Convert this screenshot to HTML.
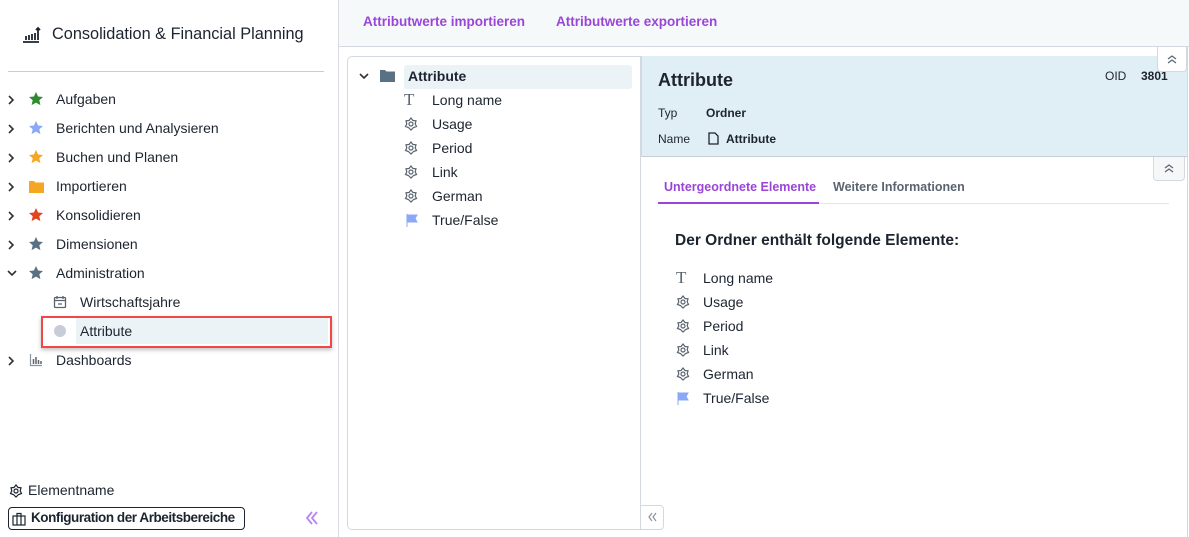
<!DOCTYPE html>
<html><head><meta charset="utf-8"><style>
*{box-sizing:border-box;margin:0;padding:0}
body{width:1189px;height:537px;overflow:hidden;background:#fff;font-family:"Liberation Sans",sans-serif;color:#1c2430;font-size:14px;position:relative}
.a{position:absolute;white-space:nowrap}
.side{position:absolute;left:0;top:0;width:339px;height:537px;border-right:1px solid #d8dbe3}
.nav{position:absolute;left:56px;font-size:14px}
.ico{position:absolute}
.top{position:absolute;left:339px;top:0;width:850px;height:47px;background:#f5f9fa;border-bottom:1px solid #d4d8e0}
.purple{color:#9b45d8;font-weight:bold;font-size:13.5px}
.st{position:absolute;left:28px;width:16px;height:16px}
</style></head><body>
<svg width="0" height="0" style="position:absolute"><defs>
<path id="star" d="M8 1l2.1 4.5 4.9.5-3.7 3.3 1.1 4.8L8 11.6 3.6 14.1l1.1-4.8L1 6l4.9-.5z"/>
<path id="cr" d="M4 3l4 4-4 4" fill="none" stroke="#333" stroke-width="1.6"/>
<path id="cd" d="M3 5l4 4 4-4" fill="none" stroke="#333" stroke-width="1.6"/>
</defs></svg>
<div class="side">
  <svg class="ico" style="left:22px;top:25px" width="20" height="20" viewBox="0 0 20 20"><path d="M1 17h16M4 15v-4M7 15v-5M10 15v-6M13 15v-7M16 15V3M14 5l2-2 2 2" stroke="#1c2430" stroke-width="1.8" fill="none"/></svg>
  <div class="a" style="left:52px;top:25px;font-size:16.3px;color:#1c2430">Consolidation &amp; Financial Planning</div>
  <div style="position:absolute;left:8px;top:71px;width:316px;height:1px;background:#c8ccd4"></div>
  <svg class="ico" style="left:5px;top:93px" width="14" height="14"><use href="#cr"/></svg><svg class="st" style="top:91px" viewBox="0 0 16 16"><use href="#star" fill="#2e8b2e"/></svg><div class="nav a" style="top:91px">Aufgaben</div>
  <svg class="ico" style="left:5px;top:122px" width="14" height="14"><use href="#cr"/></svg><svg class="st" style="top:120px" viewBox="0 0 16 16"><use href="#star" fill="#8aa8f5"/></svg><div class="nav a" style="top:120px">Berichten und Analysieren</div>
  <svg class="ico" style="left:5px;top:151px" width="14" height="14"><use href="#cr"/></svg><svg class="st" style="top:149px" viewBox="0 0 16 16"><use href="#star" fill="#f5a623"/></svg><div class="nav a" style="top:149px">Buchen und Planen</div>
  <svg class="ico" style="left:5px;top:180px" width="14" height="14"><use href="#cr"/></svg><svg class="ico" style="left:29px;top:180px" width="15" height="14" viewBox="0 0 15 14"><path d="M0 1h5l1.5 1.5H15V13H0z" fill="#f5a623"/></svg><div class="nav a" style="top:178px">Importieren</div>
  <svg class="ico" style="left:5px;top:209px" width="14" height="14"><use href="#cr"/></svg><svg class="st" style="top:207px" viewBox="0 0 16 16"><use href="#star" fill="#e0451f"/></svg><div class="nav a" style="top:207px">Konsolidieren</div>
  <svg class="ico" style="left:5px;top:238px" width="14" height="14"><use href="#cr"/></svg><svg class="st" style="top:236px" viewBox="0 0 16 16"><use href="#star" fill="#5a7184"/></svg><div class="nav a" style="top:236px">Dimensionen</div>
  <svg class="ico" style="left:5px;top:266px" width="14" height="14"><use href="#cd"/></svg><svg class="st" style="top:265px" viewBox="0 0 16 16"><use href="#star" fill="#5a7184"/></svg><div class="nav a" style="top:265px">Administration</div>
  <svg class="ico" style="left:53px;top:295px" width="14" height="14" viewBox="0 0 14 14"><rect x="1.5" y="2.5" width="11" height="10" rx="1" fill="none" stroke="#5a6470" stroke-width="1.3"/><path d="M1.5 5.5h11M4 1v3M10 1v3M5 9h4" stroke="#5a6470" stroke-width="1.3"/></svg>
  <div class="a" style="left:80px;top:294px">Wirtschaftsjahre</div>
  <div style="position:absolute;left:76px;top:318px;width:252px;height:26px;background:#ecf3f6"></div>
  <div style="position:absolute;left:41px;top:316px;width:291px;height:32px;border:2px solid #f04848;box-shadow:0 2px 4px rgba(0,0,0,.25)"></div>
  <div class="ico" style="left:54px;top:325px;width:12px;height:12px;border-radius:50%;background:#c8ccd8"></div>
  <div class="a" style="left:80px;top:323px">Attribute</div>
  <svg class="ico" style="left:5px;top:354px" width="14" height="14"><use href="#cr"/></svg>
  <svg class="ico" style="left:29px;top:353px" width="14" height="14" viewBox="0 0 14 14"><path d="M1.5 1v11.5H13" stroke="#8a92a0" stroke-width="1.2" fill="none"/><path d="M4.5 11V6M7 11V4M9.5 11V7M12 11V8" stroke="#5a6470" stroke-width="1.5"/></svg>
  <div class="nav a" style="top:352px">Dashboards</div>
  <svg class="ico" style="left:9px;top:484px" width="14" height="14" viewBox="0 0 14 14"><path d="M7 1l2 2.5 3 .3-.8 3 1.3 2.7-2.9 1L7 13l-2.6-2.5-2.9-1L2.8 6.8 2 3.8l3-.3z" fill="none" stroke="#1c2430" stroke-width="1.2"/><circle cx="7" cy="7" r="2" fill="none" stroke="#1c2430" stroke-width="1.2"/></svg>
  <div class="a" style="left:28px;top:482px">Elementname</div>
  <div style="position:absolute;left:8px;top:507px;width:237px;height:23px;border:1px solid #1c2430;border-radius:4px"></div>
  <svg class="ico" style="left:12px;top:512px" width="14" height="14" viewBox="0 0 14 14"><rect x="1" y="4" width="12" height="9" fill="none" stroke="#1c2430" stroke-width="1.2"/><path d="M5 4V1.5h4V4M5 4v9M9 4v9" stroke="#1c2430" stroke-width="1.2" fill="none"/></svg>
  <div class="a" style="left:31px;top:510px;font-weight:bold;font-size:13.5px;letter-spacing:-.45px">Konfiguration der Arbeitsbereiche</div>
  <svg class="ico" style="left:304px;top:510px" width="16" height="16" viewBox="0 0 16 16"><path d="M8 2L3 8l5 6M13 2L8 8l5 6" fill="none" stroke="#b884f0" stroke-width="1.8"/></svg>
</div>
<div class="top">
  <div class="a purple" style="left:24px;top:14px">Attributwerte importieren</div>
  <div class="a purple" style="left:217px;top:14px">Attributwerte exportieren</div>
</div>
<div style="position:absolute;left:347px;top:56px;width:294px;height:474px;border:1px solid #d4d8e0;border-radius:5px 0 0 5px"></div>
<svg class="ico" style="left:357px;top:69px" width="14" height="14"><use href="#cd"/></svg>
<svg class="ico" style="left:380px;top:69px" width="15" height="13" viewBox="0 0 15 13"><path d="M0 1h5l1.5 1.5H15V13H0z" fill="#5a7184"/></svg>
<div style="position:absolute;left:404px;top:65px;width:228px;height:24px;background:#ecf3f6;border-radius:3px"></div>
<div class="a" style="left:408px;top:68px;font-weight:bold">Attribute</div>
<div class="a" style="left:404px;top:90px;font-family:'Liberation Serif',serif;font-size:17px;color:#5a6470">T</div>
<div class="a" style="left:432px;top:92px">Long name</div>
<div class="a" style="left:432px;top:116px">Usage</div>
<div class="a" style="left:432px;top:140px">Period</div>
<div class="a" style="left:432px;top:164px">Link</div>
<div class="a" style="left:432px;top:188px">German</div>
<div class="a" style="left:432px;top:212px">True/False</div>
<svg class="ico" style="left:404px;top:117px" width="14" height="96" viewBox="0 0 14 96">
<g fill="none" stroke="#5a6470" stroke-width="1.2"><path id="f" d="M7 1l2 2.5 3 .3-.8 3 1.3 2.7-2.9 1L7 13l-2.6-2.5-2.9-1L2.8 6.8 2 3.8l3-.3z"/><circle cx="7" cy="7" r="2"/>
<g transform="translate(0,24)"><use href="#f"/><circle cx="7" cy="7" r="2"/></g>
<g transform="translate(0,48)"><use href="#f"/><circle cx="7" cy="7" r="2"/></g>
<g transform="translate(0,72)"><use href="#f"/><circle cx="7" cy="7" r="2"/></g></g></svg>
<svg class="ico" style="left:406px;top:214px" width="12" height="13" viewBox="0 0 12 13"><path d="M1 0v13M1 1h10l-2 3.5 2 3.5H1z" fill="#8aa8f5" stroke="#8aa8f5"/></svg>
<div style="position:absolute;left:640px;top:505px;width:24px;height:25px;border:1px solid #d4d8e0;border-radius:0 4px 4px 0"></div>
<svg class="ico" style="left:646px;top:511px" width="12" height="12" viewBox="0 0 12 12"><path d="M6 2L3 6l3 4M10 2L7 6l3 4" fill="none" stroke="#8a92a0" stroke-width="1.2"/></svg>
<div style="position:absolute;left:641px;top:56px;width:546px;height:101px;background:#e0eff5;border-bottom:1px solid #c8ccd4;border-left:1px solid #d4d8e0"></div>
<div class="a" style="left:658px;top:70px;font-size:18px;font-weight:bold">Attribute</div>
<div class="a" style="left:1105px;top:69px;font-size:12px">OID</div>
<div class="a" style="left:1141px;top:69px;font-size:12px;font-weight:bold">3801</div>
<div class="a" style="left:658px;top:106px;font-size:12px">Typ</div>
<div class="a" style="left:706px;top:106px;font-size:12px;font-weight:bold">Ordner</div>
<div class="a" style="left:658px;top:132px;font-size:12px">Name</div>
<svg class="ico" style="left:708px;top:132px" width="11" height="13" viewBox="0 0 11 13"><path d="M1 1h6l3 3v8H1z" fill="none" stroke="#1c2430" stroke-width="1.3"/></svg>
<div class="a" style="left:726px;top:132px;font-size:12px;font-weight:bold">Attribute</div>
<div style="position:absolute;left:1157px;top:47px;width:30px;height:25px;background:#fff;border:1px solid #d4d8e0;border-top:none;border-radius:0 0 4px 4px"></div>
<svg class="ico" style="left:1166px;top:53px" width="12" height="12" viewBox="0 0 12 12"><path d="M2 6l4-3 4 3M2 10l4-3 4 3" fill="none" stroke="#5a6470" stroke-width="1.2"/></svg>
<div style="position:absolute;left:1153px;top:157px;width:32px;height:24px;background:#f5f7f9;border:1px solid #d4d8e0;border-top:none;border-radius:0 0 4px 4px"></div>
<svg class="ico" style="left:1163px;top:162px" width="12" height="12" viewBox="0 0 12 12"><path d="M2 6l4-3 4 3M2 10l4-3 4 3" fill="none" stroke="#5a6470" stroke-width="1.2"/></svg>
<div class="a" style="left:664px;top:180px;font-size:12.5px;color:#9b45d8;font-weight:bold">Untergeordnete Elemente</div>
<div class="a" style="left:833px;top:180px;font-size:12.5px;color:#5a6470;font-weight:bold">Weitere Informationen</div>
<div style="position:absolute;left:658px;top:203px;width:511px;height:1px;background:#e4e6ea"></div>
<div style="position:absolute;left:658px;top:202px;width:161px;height:2px;background:#9b45d8"></div>
<div class="a" style="left:675px;top:232px;font-size:15.5px;font-weight:bold">Der Ordner enthält folgende Elemente:</div>
<div class="a" style="left:676px;top:268px;font-family:'Liberation Serif',serif;font-size:17px;color:#5a6470">T</div>
<div class="a" style="left:703px;top:270px">Long name</div>
<div class="a" style="left:703px;top:294px">Usage</div>
<div class="a" style="left:703px;top:318px">Period</div>
<div class="a" style="left:703px;top:342px">Link</div>
<div class="a" style="left:703px;top:366px">German</div>
<div class="a" style="left:703px;top:390px">True/False</div>
<svg class="ico" style="left:676px;top:295px" width="14" height="96" viewBox="0 0 14 96">
<g fill="none" stroke="#5a6470" stroke-width="1.2"><use href="#f"/><circle cx="7" cy="7" r="2"/>
<g transform="translate(0,24)"><use href="#f"/><circle cx="7" cy="7" r="2"/></g>
<g transform="translate(0,48)"><use href="#f"/><circle cx="7" cy="7" r="2"/></g>
<g transform="translate(0,72)"><use href="#f"/><circle cx="7" cy="7" r="2"/></g></g></svg>
<svg class="ico" style="left:677px;top:392px" width="12" height="13" viewBox="0 0 12 13"><path d="M1 0v13M1 1h10l-2 3.5 2 3.5H1z" fill="#8aa8f5" stroke="#8aa8f5"/></svg>
<div style="position:absolute;left:1187px;top:47px;width:1px;height:490px;background:#d4d8e0"></div>
</body></html>
